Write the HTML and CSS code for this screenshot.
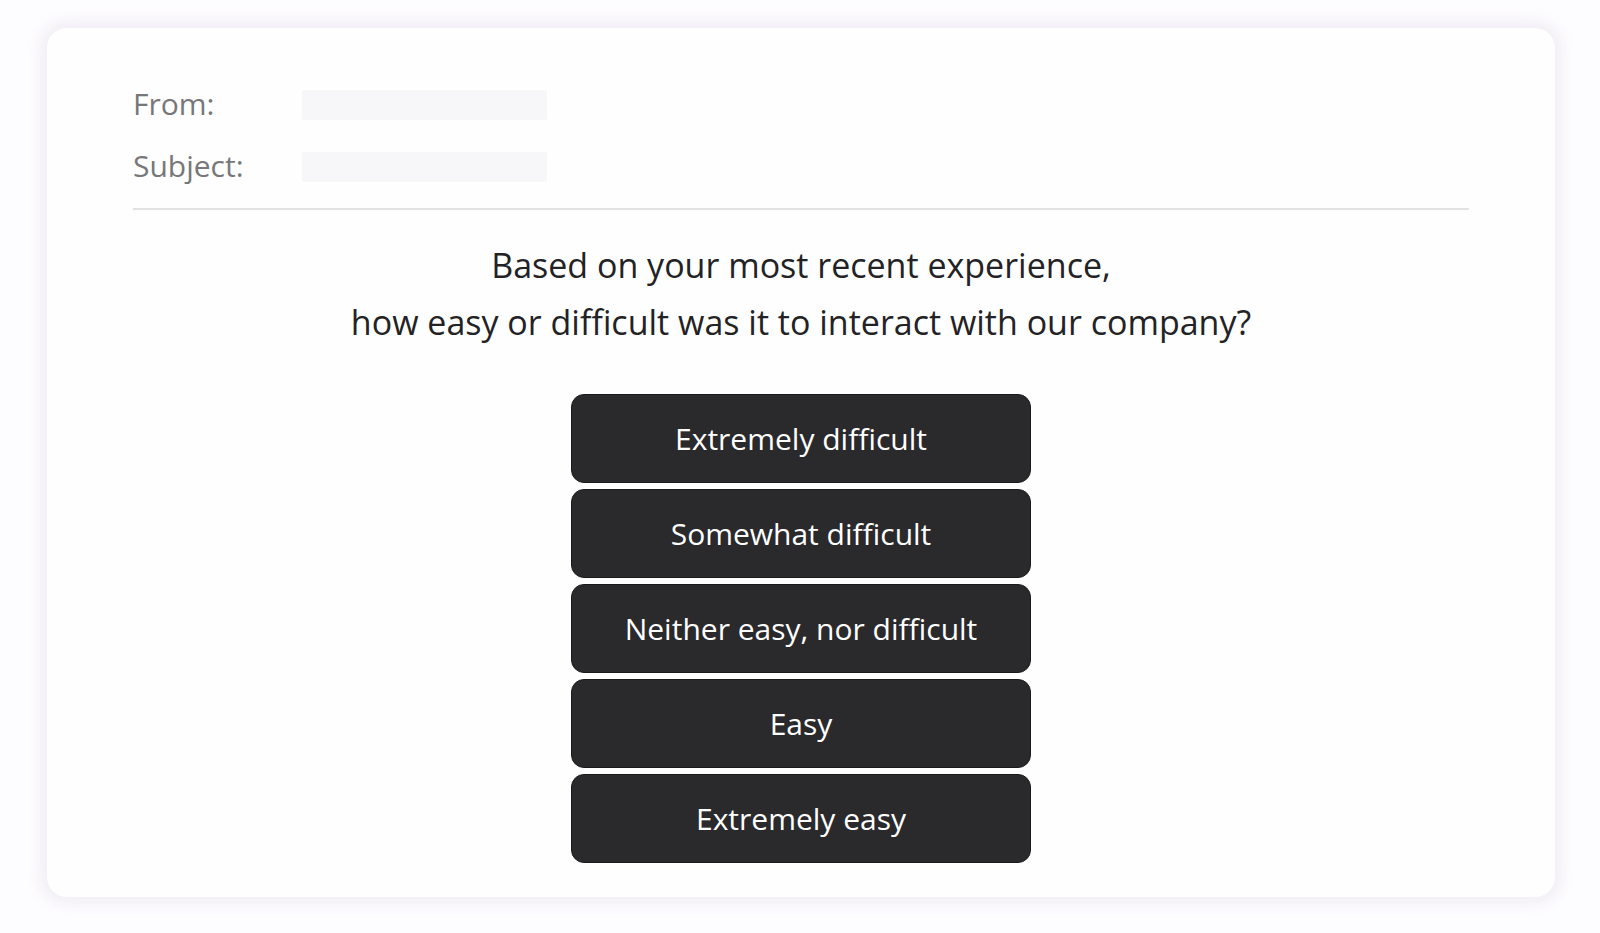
FILE: index.html
```html
<!DOCTYPE html>
<html>

	<head>
		<meta charset="UTF-8">
		<title>Survey email</title>
		<link rel="stylesheet" href="styles.css">
	</head>

	<body>
		<div class="mail_card">
			<div class="mail_head">
				<div class="mail_row">
					<span class="mail_label">From:</span>
					<span class="mail_blank"></span>
				</div>
				<div class="mail_row">
					<span class="mail_label">Subject:</span>
					<span class="mail_blank"></span>
				</div>
			</div>
			<div class="mail_line"></div>
			<p class="question">
				Based on your most recent experience,<br>
				how easy or difficult was it to interact with our company?
			</p>
			<div class="answers">
				<button class="answer">Extremely difficult</button>
				<button class="answer">Somewhat difficult</button>
				<button class="answer">Neither easy, nor difficult</button>
				<button class="answer">Easy</button>
				<button class="answer">Extremely easy</button>
			</div>
		</div>
	</body>

</html>
```

FILE: styles.css
```css
body {
	margin: 0;
	background-color: #fdfcfe;
	font-family: "Open Sans", "Noto Sans", sans-serif;
}

.mail_card {
	margin: 28px 45px 36px 47px;
	height: 869px;
	box-sizing: border-box;
	padding: 62px 86px 0 86px;
	background-color: #fefefe;
	border-radius: 20px;
	box-shadow: 0 0 14px 6px rgba(238, 234, 243, 0.8);
}

.mail_head {
	display: flex;
	flex-direction: column;
	gap: 32px;
}

.mail_row {
	display: flex;
	align-items: center;
	height: 30px;
}

.mail_label {
	width: 169px;
	padding-bottom: 4px;
	font-size: 30px;
	color: #77777a;
}

.mail_blank {
	width: 245px;
	height: 30px;
	background-color: #f7f7f9;
	border-radius: 2px;
}

.mail_line {
	margin-top: 26px;
	height: 2px;
	background-color: #e2e2e3;
}

.question {
	margin: 27px 0 0 0;
	font-size: 34px;
	line-height: 57px;
	text-align: center;
	color: #232225;
}

.answers {
	margin-top: 43px;
	display: flex;
	flex-direction: column;
	align-items: center;
	gap: 6px;
}

.answer {
	width: 460px;
	height: 89px;
	border: 1px solid #1a191b;
	border-radius: 13px;
	background-color: #2a292c;
	color: #ffffff;
	font-family: "Open Sans", "Noto Sans", sans-serif;
	font-size: 30px;
	padding: 0;
}
```
